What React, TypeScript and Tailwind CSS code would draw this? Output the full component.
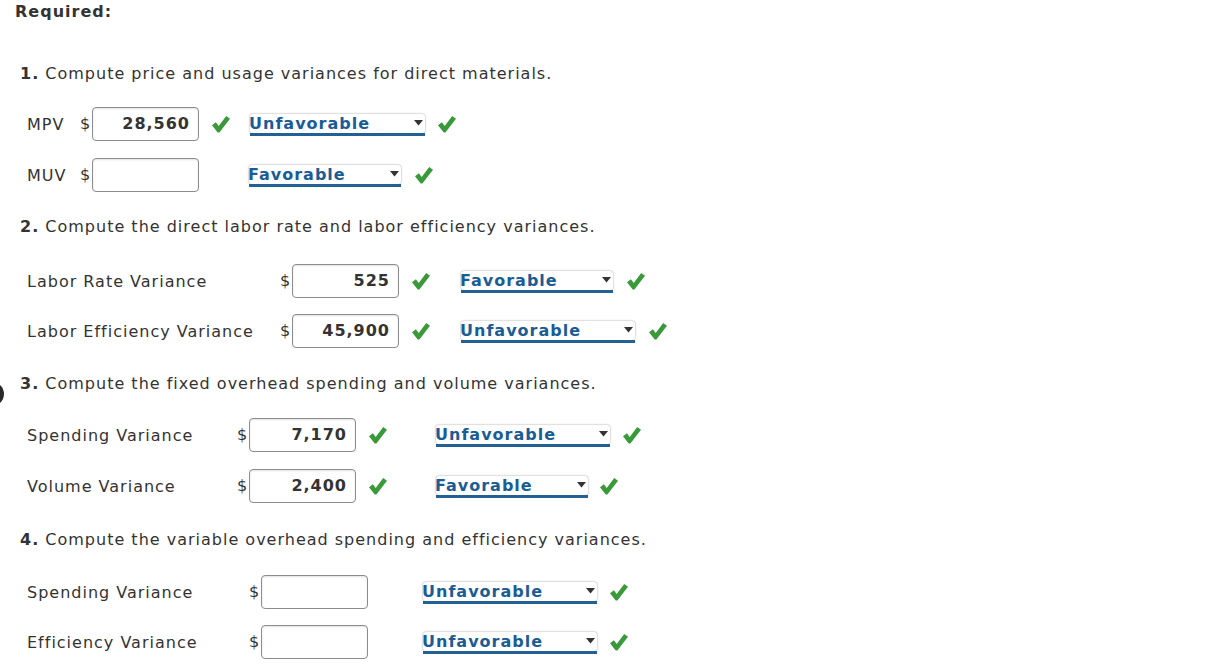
import React from "react";

const Check = () => (
  <svg width="18" height="17" viewBox="0 0 18 17" className="shrink-0">
    <path d="M0 9.3 L3.9 6.3 L6.7 9.9 L14.2 0 L18 2.7 L7.4 16.6 L5.7 16.6 Z" fill="#3a9a3a" />
  </svg>
);

const Select = ({ value, w }: { value: string; w: string }) => (
  <div className={`flex flex-col ${w}`}>
    <div className="h-[19px] bg-white rounded-[3px] shadow-[0_0_2px_rgba(0,0,0,0.45)] flex items-center justify-between pl-0 pr-[2px]">
      <span className="text-[16px] font-bold text-[#1a5c94] leading-[19px] -ml-[1px]">{value}</span>
      <svg width="9" height="6" viewBox="0 0 9 6">
        <path d="M0 0 H9 L4.5 5.5 Z" fill="#333" />
      </svg>
    </div>
    <div className="h-[3px] bg-[#236093]" />
  </div>
);

const Input = ({ value, w = "w-[107px]" }: { value?: string; w?: string }) => (
  <div
    className={`${w} h-[34px] shrink-0 border border-[#8c8c8c] rounded-[4px] bg-white shadow-[inset_0_1px_2px_rgba(0,0,0,0.12)] flex items-center justify-end pr-[8px] text-[16px] font-bold text-[#333]`}
  >
    {value}
  </div>
);

type RowProps = {
  label: string;
  labelW: string;
  value?: string;
  check1: boolean;
  selGap: string;
  sel: string;
  selW: string;
  gap2: string;
  mt: string;
};

const Row = ({ label, labelW, value, check1, selGap, sel, selW, gap2, mt }: RowProps) => (
  <div className={`flex items-center h-[34px] pl-[27px] ${mt}`}>
    <span className={`${labelW} shrink-0 text-[16px] text-[#333] pt-[1px]`}>{label}</span>
    <span className="w-[12px] shrink-0 text-[16px] text-[#333] tracking-normal">$</span>
    <Input value={value} />
    {check1 ? (
      <div className="ml-[13px] flex items-center">
        <Check />
      </div>
    ) : null}
    <div className={`${selGap} pt-[1px]`}>
      <Select value={sel} w={selW} />
    </div>
    <div className={`${gap2}`}>
      <Check />
    </div>
  </div>
);

const Heading = ({ n, text, mt }: { n: string; text: string; mt: string }) => (
  <div className={`pl-[20px] h-[24px] leading-[24px] text-[16px] text-[#333] ${mt}`}>
    <span className="font-bold">{n}</span> {text}
  </div>
);

export default function App() {
  return (
    <div
      className="relative w-[1212px] h-[669px] bg-white overflow-hidden tracking-[1px]"
      style={{ fontFamily: '"DejaVu Sans", Verdana, sans-serif' }}
    >
      <div className="absolute -left-[20px] top-[382px] w-[24px] h-[24px] rounded-full bg-[#2a2a2a]" />
      <div className="pl-[15px] h-[24px] leading-[24px] text-[16px] font-bold text-[#333]">Required:</div>

      <Heading n="1." text="Compute price and usage variances for direct materials." mt="mt-[38px]" />
      <Row label="MPV" labelW="w-[53px]" value="28,560" check1 selGap="ml-[20px]" sel="Unfavorable" selW="w-[175px]" gap2="ml-[13px]" mt="mt-[21px]" />
      <Row label="MUV" labelW="w-[53px]" check1={false} selGap="ml-[50px]" sel="Favorable" selW="w-[152px]" gap2="ml-[14px]" mt="mt-[17px]" />

      <Heading n="2." text="Compute the direct labor rate and labor efficiency variances." mt="mt-[23px]" />
      <Row label="Labor Rate Variance" labelW="w-[253px]" value="525" check1 selGap="ml-[31px]" sel="Favorable" selW="w-[152px]" gap2="ml-[14px]" mt="mt-[25px]" />
      <Row label="Labor Efficiency Variance" labelW="w-[253px]" value="45,900" check1 selGap="ml-[31px]" sel="Unfavorable" selW="w-[174px]" gap2="ml-[14px]" mt="mt-[16px]" />

      <Heading n="3." text="Compute the fixed overhead spending and volume variances." mt="mt-[24px]" />
      <Row label="Spending Variance" labelW="w-[210px]" value="7,170" check1 selGap="ml-[49px]" sel="Unfavorable" selW="w-[174px]" gap2="ml-[13px]" mt="mt-[22px]" />
      <Row label="Volume Variance" labelW="w-[210px]" value="2,400" check1 selGap="ml-[49px]" sel="Favorable" selW="w-[152px]" gap2="ml-[12px]" mt="mt-[17px]" />

      <Heading n="4." text="Compute the variable overhead spending and efficiency variances." mt="mt-[25px]" />
      <Row label="Spending Variance" labelW="w-[222px]" check1={false} selGap="ml-[55px]" sel="Unfavorable" selW="w-[174px]" gap2="ml-[13px]" mt="mt-[23px]" />
      <Row label="Efficiency Variance" labelW="w-[222px]" check1={false} selGap="ml-[55px]" sel="Unfavorable" selW="w-[174px]" gap2="ml-[13px]" mt="mt-[16px]" />
    </div>
  );
}
